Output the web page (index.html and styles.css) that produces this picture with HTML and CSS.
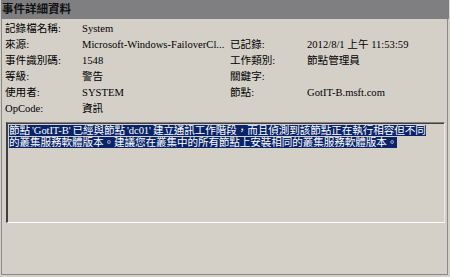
FILE: index.html
```html
<!DOCTYPE html>
<html lang="zh-Hant">
<head>
    <meta charset="UTF-8">
    <title>事件詳細資料</title>
    <link rel="stylesheet" href="styles.css">
</head>
<body>
    <div class="panel">
        <div class="panel-title">事件詳細資料</div>

        <div class="details">
            <div class="lbl">記錄檔名稱:</div>
            <div class="val">System</div>
            <div class="lbl"></div>
            <div class="val"></div>

            <div class="lbl">來源:</div>
            <div class="val">Microsoft-Windows-FailoverCl...</div>
            <div class="lbl">已記錄:</div>
            <div class="val">2012/8/1 上午 11:53:59</div>

            <div class="lbl">事件識別碼:</div>
            <div class="val">1548</div>
            <div class="lbl">工作類別:</div>
            <div class="val">節點管理員</div>

            <div class="lbl">等級:</div>
            <div class="val">警告</div>
            <div class="lbl">關鍵字:</div>
            <div class="val"></div>

            <div class="lbl">使用者:</div>
            <div class="val">SYSTEM</div>
            <div class="lbl">節點:</div>
            <div class="val">GotIT-B.msft.com</div>

            <div class="lbl">OpCode:</div>
            <div class="val">資訊</div>
            <div class="lbl"></div>
            <div class="val"></div>
        </div>

        <div class="desc">
            <span class="sel">節點 'GotIT-B' 已經與節點 'dc01' 建立通訊工作階段，而且偵測到該節點正在執行相容但不同</span><br>
            <span class="sel">的叢集服務軟體版本。建議您在叢集中的所有節點上安裝相同的叢集服務軟體版本。</span>
        </div>
    </div>
</body>
</html>
```

FILE: styles.css
```css
body {
    margin: 0;
    background: #d4d0c8;
    font-family: "Liberation Serif", "Noto Sans CJK TC", serif;
    font-size: 10.6px;
    color: #000;
}
.panel {
    width: 447px;
    height: 275px;
    border-left: 1px solid #8a8a8a;
    border-right: 1px solid #8a8a8a;
    border-bottom: 1px solid #8a8a8a;
    background: #d4d0c8;
    box-sizing: border-box;
    margin-left: 1px;
}
.panel-title {
    height: 19px;
    line-height: 19px;
    background: #7f7f82;
    color: #111;
    font-weight: bold;
    font-size: 11.5px;
    padding-left: 1px;
    margin-left: -1px;
    margin-right: -2px;
}
.details {
    display: grid;
    grid-template-columns: 77px 148px 77px 1fr;
    grid-auto-rows: 16px;
    padding: 2px 0 0 3px;
    line-height: 16px;
}
.lbl, .val {
    white-space: nowrap;
    overflow: hidden;
}
.desc {
    margin: 5px 2px 0 4px;
    height: 101px;
    box-sizing: border-box;
    border-top: 1px solid #808080;
    border-left: 2px solid #404040;
    border-right: 1px solid #ece9e2;
    border-bottom: 1px solid #ffffff;
    box-shadow: inset 0 1px 0 #404040;
    padding: 2px 0 0 1px;
    line-height: 11.5px;
    letter-spacing: -0.1px;
    word-spacing: -0.5px;
    white-space: nowrap;
    overflow: hidden;
}
.sel {
    background: #0a246a;
    color: #fff;
}
```
